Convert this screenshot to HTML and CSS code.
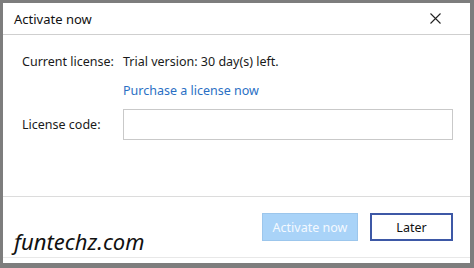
FILE: index.html
```html
<!DOCTYPE html>
<html>
<head>
<meta charset="utf-8">
<link rel="stylesheet" href="styles.css">
</head>
<body>
<div class="window">
  <div class="titlebar">
    <span class="title">Activate now</span>
    <svg class="close" width="11" height="11" viewBox="0 0 11 11"><path d="M0.5 0.5L10.5 10.5M10.5 0.5L0.5 10.5" stroke="#222" stroke-width="1.1" fill="none"/></svg>
  </div>
  <div class="content">
    <div class="form">
      <span class="label">Current license:</span>
      <span class="value">Trial version: 30 day(s) left.</span>
      <span></span>
      <a class="link">Purchase a license now</a>
      <span class="label code">License code:</span>
      <div class="input"></div>
    </div>
  </div>
  <div class="footer">
    <span class="brand">funtechz.com</span>
    <div class="buttons">
      <button class="btn primary">Activate now</button>
      <button class="btn later">Later</button>
    </div>
  </div>
</div>
</body>
</html>
```
FILE: styles.css
```css
html, body { margin: 0; padding: 0; }
body { background: #808080; font-family: "Noto Sans", "Open Sans", sans-serif; color: #1a1a1a; }
.window {
  width: 474px; height: 268px; box-sizing: border-box;
  border-style: solid; border-color: #7d7d7d;
  border-width: 3px 4px 5px 3px;
  padding-bottom: 5px;
  background: #fff;
  display: flex; flex-direction: column;
}
.titlebar {
  height: 32px; box-sizing: border-box; flex: none;
  border-bottom: 1px solid #cfcfcf;
  display: flex; align-items: center; justify-content: space-between;
  padding: 0 29px 0 11px;
}
.title { font-size: 13px; color: #111; }
.close { display: block; }
.content { flex: 1; padding: 17px 17px 0 19px; border-bottom: 1px solid #dcdcdc; }
.form {
  display: grid; grid-template-columns: 101px 1fr;
  grid-template-rows: 19px 22px 31px;
  row-gap: 8px; align-items: center;
  font-size: 12.5px;
}
.label, .value { white-space: nowrap; }
.link { color: #2a6fc4; }
.input { height: 31px; box-sizing: border-box; border: 1px solid #c9c9c9; }
.footer {
  height: 61px; box-sizing: border-box; flex: none;
  border-bottom: 1px solid #e8e8e8;
  display: flex; align-items: flex-start; justify-content: space-between;
  padding: 16px 17px 0 11px;
}
.brand { font-style: italic; font-size: 22px; line-height: 28px; color: #111; margin-top: 14px; }
.buttons { display: flex; gap: 12px; }
.btn {
  font-family: inherit; font-size: 12.5px; height: 28px; box-sizing: border-box;
  padding: 0; margin: 0;
}
.primary { width: 96px; background: #a9d3f8; border: 1px solid #9cc6ec; color: #f4f9ff; }
.later { width: 83px; background: #fff; border: 2px solid #3d58a6; color: #111; }
```
